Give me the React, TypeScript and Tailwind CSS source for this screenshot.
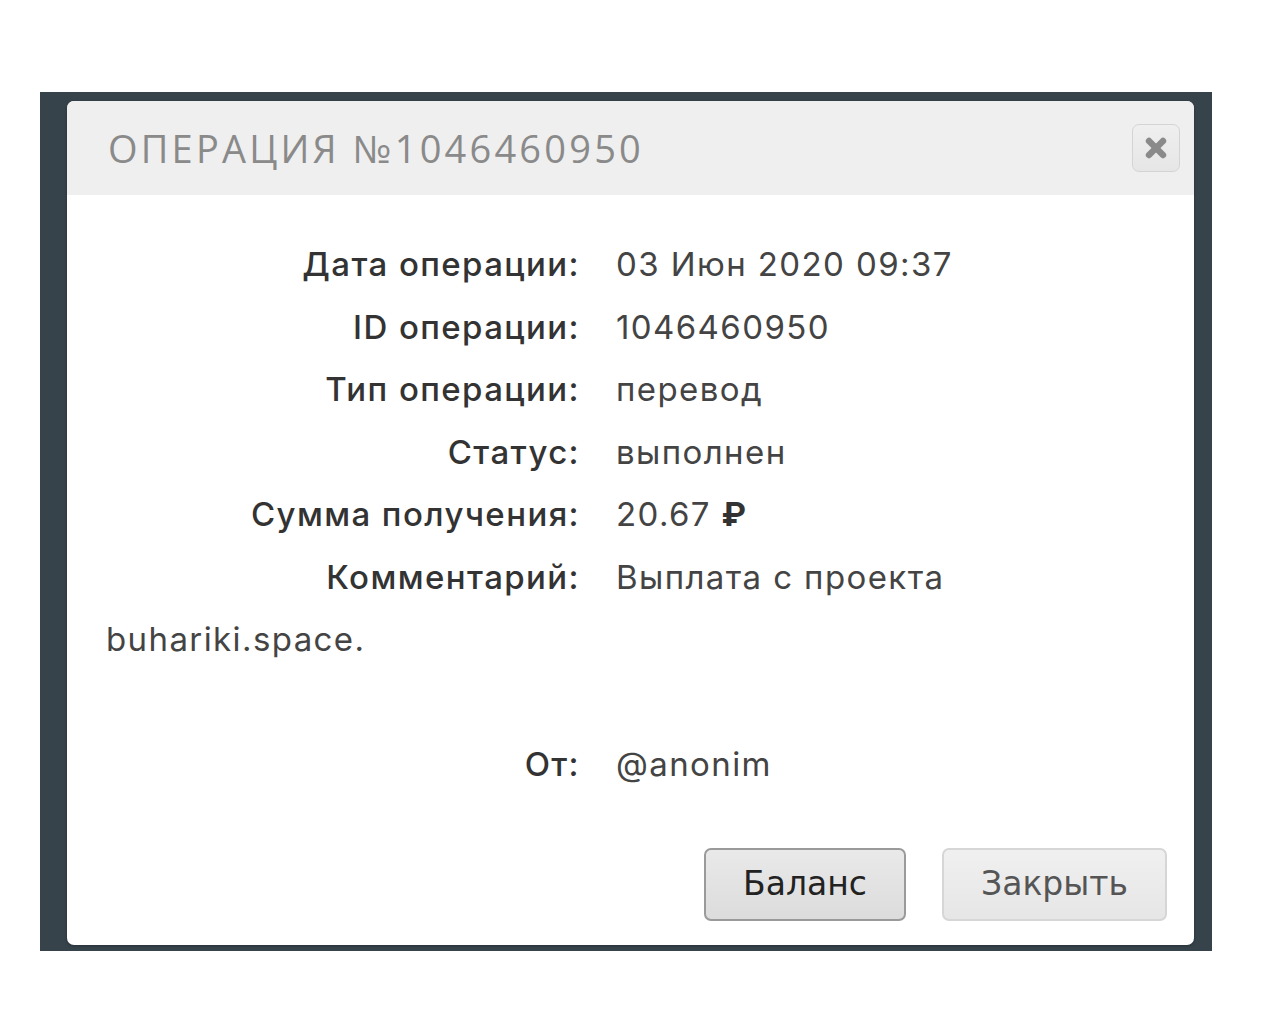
import { X } from "lucide-react";

const rows: [string, React.ReactNode][] = [
  ["Дата операции:", "03 Июн 2020 09:37"],
  ["ID операции:", "1046460950"],
  ["Тип операции:", "перевод"],
  ["Статус:", "выполнен"],
  [
    "Сумма получения:",
    <>
      20.67 <span className="font-bold text-[#333]">₽</span>
    </>,
  ],
];

export default function App() {
  return (
    <div className="min-h-[1024px] w-[1280px] bg-white pt-[92px] pl-[40px]">
      <div className="w-[1172px] h-[859px] bg-[#36434b] pl-[27px] pt-[9px]">
        <div className="w-[1127px] h-[844px] bg-white rounded-[7px] overflow-hidden flex flex-col shadow-[0_1px_3px_rgba(0,0,0,0.3)]">
          <div className="h-[94px] bg-[#efefef] flex items-center justify-between pl-[41px] pr-[14px]">
            <h2
              className="text-[38px] tracking-[3.2px] text-[#8a8a8a] font-medium"
              style={{ fontFamily: "'Open Sans', 'Noto Sans', sans-serif" }}
            >
              ОПЕРАЦИЯ №1046460950
            </h2>
            <button className="w-[48px] h-[48px] rounded-[7px] border border-[#d4d4d4] bg-gradient-to-b from-[#efefef] to-[#e6e6e6] flex items-center justify-center">
              <X size={28} strokeWidth={5.5} className="text-[#8a8a8a]" />
            </button>
          </div>

          <div
            className="flex-1 flex flex-col pt-[38px] pl-[39px] pr-[27px] text-[33px] leading-[62.5px] tracking-[1.4px]"
            style={{ fontFamily: "Inter, 'Noto Sans', sans-serif" }}
          >
            {rows.map(([k, v]) => (
              <div key={k} className="flex">
                <span className="w-[474px] text-right text-[#333] font-medium">{k}</span>
                <span className="ml-[36px] text-[#444]">{v}</span>
              </div>
            ))}
            <div className="flex">
              <span className="w-[474px] text-right text-[#333] font-medium">Комментарий:</span>
              <span className="ml-[36px] text-[#444]">Выплата с проекта</span>
            </div>
            <div className="text-[#444]">buhariki.space.</div>
            <div className="h-[62.5px]" />
            <div className="flex">
              <span className="w-[474px] text-right text-[#333] font-medium">От:</span>
              <span className="ml-[36px] text-[#444]">@anonim</span>
            </div>

            <div
              className="flex justify-end gap-[36px] mt-[52px] tracking-normal"
              style={{ fontFamily: "'DejaVu Sans', Verdana, sans-serif" }}
            >
              <button className="w-[202px] h-[73px] rounded-[7px] border-2 border-[#9a9a9a] bg-gradient-to-b from-[#e9e9e9] to-[#dcdcdc] text-[33px] text-[#222]">
                Баланс
              </button>
              <button className="w-[225px] h-[73px] rounded-[7px] border-2 border-[#d6d6d6] bg-gradient-to-b from-[#f0f0f0] to-[#e6e6e6] text-[33px] text-[#555]">
                Закрыть
              </button>
            </div>
          </div>
        </div>
      </div>
    </div>
  );
}
